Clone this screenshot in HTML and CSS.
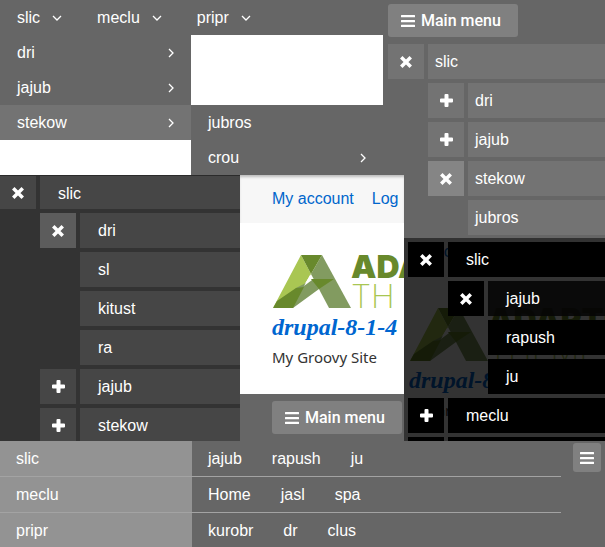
FILE: index.html
```html
<!DOCTYPE html>
<html lang="en">
<head>
<meta charset="utf-8">
<title>Menu styles</title>
<link rel="stylesheet" href="styles.css">
</head>
<body>
<svg class="defs" aria-hidden="true">
  <symbol id="bars" viewBox="0 0 14 12"><path d="M.5 0h13q.5 0 .5.5v1.200q0 .5-.5.5H.5q-.5 0-.5-.5V.5Q0 0 .5 0zM.5 5h13q.5 0 .5.5v1.200q0 .5-.5.5H.5q-.5 0-.5-.5V5.500Q0 5 .5 5zM.5 9.800h13q.5 0 .5.5v1.200q0 .5-.5.5H.5q-.5 0-.5-.5v-1.200q0-.5.5-.5z"/></symbol>
  <symbol id="plus" viewBox="0 0 13 13"><path d="M5.5 0h2q1 0 1 1v3.500h3.500q1 0 1 1v2q0 1-1 1H8.500V12q0 1-1 1h-2q-1 0-1-1V8.500H1q-1 0-1-1v-2q0-1 1-1h3.500V1q0-1 1-1z"/></symbol>
  <symbol id="cross" viewBox="0 0 12 12"><path d="M2.500 2.500l7 7M9.500 2.500l-7 7" fill="none" stroke="currentColor" stroke-width="3.500" stroke-linecap="square"/></symbol>
  <symbol id="down" viewBox="0 0 10 6"><path d="M1 1l4 4 4-4" fill="none" stroke="currentColor" stroke-width="1.300"/></symbol>
  <symbol id="right" viewBox="0 0 6 10"><path d="M1 1l4 4-4 4" fill="none" stroke="currentColor" stroke-width="1.300"/></symbol>
  <symbol id="mark" viewBox="0 0 78 53">
    <path fill="#a9c653" d="M28 0l10 19-7 11-8 4L0 53z"/>
    <path fill="#829b60" d="M49 0l29 53H56L38 19z"/>
    <path fill="#829b60" d="M38 24h23L46 34 20 53h-6l9-20 8-4z"/>
    <path fill="#fff" d="M37 20l-6 11 8-6z"/>
    <path fill="#68892c" d="M28 0h21L38 19zM38 24h23L46 34zM0 53l4-7 19-13 8-1-11 21z"/>
  </symbol>
</svg>
<main class="board">
  <nav class="drops" aria-label="Drop-down menu">
    <div class="drops-bar">
      <a href="#">slic <svg class="down"><use href="#down"/></svg></a>
      <a href="#">meclu <svg class="down"><use href="#down"/></svg></a>
      <a href="#">pripr <svg class="down"><use href="#down"/></svg></a>
    </div>
    <div class="drops-body">
      <div class="sub">
        <a href="#">dri <svg class="right"><use href="#right"/></svg></a>
        <a href="#">jajub <svg class="right"><use href="#right"/></svg></a>
        <a class="hover" href="#">stekow <svg class="right"><use href="#right"/></svg></a>
      </div>
      <div class="sub fly">
        <a href="#">jubros</a>
        <a href="#">crou <svg class="right"><use href="#right"/></svg></a>
      </div>
    </div>
  </nav>

  <nav class="tree grey" aria-label="Main menu">
    <button class="toggle" type="button"><svg class="bars"><use href="#bars"/></svg>Main menu</button>
    <div class="row"><button type="button" aria-label="Close slic"><svg class="cross"><use href="#cross"/></svg></button><a href="#">slic</a></div>
    <div class="row deep"><button type="button" aria-label="Open dri"><svg class="plus"><use href="#plus"/></svg></button><a href="#">dri</a></div>
    <div class="row deep"><button type="button" aria-label="Open jajub"><svg class="plus"><use href="#plus"/></svg></button><a href="#">jajub</a></div>
    <div class="row deep"><button class="on" type="button" aria-label="Close stekow"><svg class="cross"><use href="#cross"/></svg></button><a href="#">stekow</a></div>
    <div class="row deeper"><a href="#">jubros</a></div>
  </nav>

  <nav class="tree dark" aria-label="Dark menu">
    <div class="row"><button type="button" aria-label="Close slic"><svg class="cross"><use href="#cross"/></svg></button><a href="#">slic</a></div>
    <div class="row deep"><button class="on" type="button" aria-label="Close dri"><svg class="cross"><use href="#cross"/></svg></button><a href="#">dri</a></div>
    <div class="row deeper"><a href="#">sl</a></div>
    <div class="row deeper"><a href="#">kitust</a></div>
    <div class="row deeper"><a href="#">ra</a></div>
    <div class="row deep"><button type="button" aria-label="Open jajub"><svg class="plus"><use href="#plus"/></svg></button><a href="#">jajub</a></div>
    <div class="row deep"><button type="button" aria-label="Open stekow"><svg class="plus"><use href="#plus"/></svg></button><a href="#">stekow</a></div>
  </nav>

  <section class="site">
    <div class="account"><a href="#">My account</a><a href="#">Log</a></div>
    <div class="brand">
      <div class="logo"><svg class="mark"><use href="#mark"/></svg><div class="words"><b>ADA</b><i>TH</i></div></div>
      <a class="name" href="#">drupal-8-1-4</a>
      <div class="slogan">My Groovy Site</div>
    </div>
    <div class="foot"><button class="toggle" type="button"><svg class="bars"><use href="#bars"/></svg>Main menu</button></div>
  </section>

  <nav class="tree black" aria-label="Overlay menu">
    <div class="behind" aria-hidden="true">
      <div class="account"><span>My account</span></div>
      <div class="brand">
        <div class="logo"><svg class="mark"><use href="#mark"/></svg><div class="words"><b>ADAPTI</b><i>THEME</i></div></div>
        <span class="name">drupal-8-1-4</span>
        <div class="slogan">My Groovy Site</div>
      </div>
    </div>
    <div class="row"><button type="button" aria-label="Close slic"><svg class="cross"><use href="#cross"/></svg></button><a href="#">slic</a></div>
    <div class="row deep"><button type="button" aria-label="Close jajub"><svg class="cross"><use href="#cross"/></svg></button><a class="hover" href="#">jajub</a></div>
    <div class="row deeper"><a href="#">rapush</a></div>
    <div class="row deeper"><a href="#">ju</a></div>
    <div class="row"><button type="button" aria-label="Open meclu"><svg class="plus"><use href="#plus"/></svg></button><a href="#">meclu</a></div>
    <div class="row"><button type="button" aria-label="Open pripr"></button><a href="#" aria-label="pripr"></a></div>
  </nav>
</main>

<nav class="mega" aria-label="Mega menu">
  <div class="mega-rows">
    <div class="mega-row"><a class="head" href="#">slic</a><div class="links"><a href="#">jajub</a><a href="#">rapush</a><a href="#">ju</a></div></div>
    <div class="mega-row"><a class="head" href="#">meclu</a><div class="links"><a href="#">Home</a><a href="#">jasl</a><a href="#">spa</a></div></div>
    <div class="mega-row"><a class="head" href="#">pripr</a><div class="links"><a href="#">kurobr</a><a href="#">dr</a><a href="#">clus</a></div></div>
  </div>
  <button class="mini" type="button" aria-label="Menu"><svg class="bars"><use href="#bars"/></svg></button>
</nav>
</body>
</html>
```
FILE: styles.css
```css
* { box-sizing: border-box; }
body {
  margin: 0;
  background: #666;
  color: #fff;
  font: 16px/35px "Liberation Sans", Arial, sans-serif;
}
a { color: inherit; text-decoration: none; }
button { border: 0; padding: 0; color: inherit; font: inherit; }
svg { display: block; flex: none; fill: currentColor; }
.defs { position: absolute; width: 0; height: 0; }
.bars { width: 14px; height: 12px; }
.plus { width: 13px; height: 13px; }
.cross { width: 12px; height: 12px; }
.down { width: 10px; height: 6px; }
.right { width: 6px; height: 10px; }

.board {
  display: grid;
  grid-template-columns: 240px 144px 20px minmax(0, 1fr);
  grid-template-rows: auto 63px 203px;
}

/* Drop-down menu */
.drops { grid-area: 1 / 1 / 2 / 3; }
.drops-bar { display: flex; }
.drops-bar a {
  display: flex;
  align-items: center;
  gap: 12px;
  padding: 0 18px 0 17px;
}
.drops-body {
  display: flex;
  height: 140px;
  margin-right: 1px;
  background: #fff;
}
.sub { width: 191px; align-self: flex-start; background: #666; }
.fly { flex: 1; align-self: flex-end; }
.sub a {
  display: flex;
  align-items: center;
  justify-content: space-between;
  padding: 0 17px;
}
.sub .hover { background: #737373; }

/* Tree menus */
.tree {
  display: flex;
  flex-direction: column;
  gap: 4px;
  min-width: 0;
  overflow: hidden;
}
.row { display: flex; flex: none; gap: 4px; height: 35px; }
.row button {
  display: grid;
  place-items: center;
  width: 36px;
}
.row a { flex: 1; padding-left: 18px; }
.deep { margin-left: 40px; }
.deeper { margin-left: 80px; }

.grey {
  grid-area: 1 / 2 / 3 / 5;
  margin-left: 144px;
  padding: 4px 0 3px 4px;
}
.grey .toggle { align-self: flex-start; margin-bottom: 3px; }
.grey .row button, .grey .row a { background: #737373; }
.grey .row .on { background: #858585; }
.grey .row a { padding-left: 7px; }

.dark {
  grid-area: 2 / 1 / 4 / 2;
  height: 266px;
  background: #333;
  border-top: 1px solid #2b2b2b;
}
.dark .row:first-child { height: 33px; }
.dark .row button, .dark .row a { background: #464646; }
.dark .row .on { background: #5c5c5c; }

.black {
  grid-area: 3 / 4 / 4 / 5;
  position: relative;
  padding: 4px 0 0 4px;
  background: #333;
}
.black .row { position: relative; }
.black .row button, .black .row a { background: #000; }
.black .row .hover { background: rgba(5, 5, 5, .9); }
.behind {
  position: absolute;
  top: -10px;
  left: -27px;
  width: 400px;
  background: #fff;
}
.behind::after {
  content: "";
  position: absolute;
  inset: 0;
  background: rgba(0, 0, 0, .8);
}

/* Buttons */
.toggle {
  display: flex;
  align-items: center;
  gap: 6px;
  height: 33px;
  padding: 0 17px 0 13px;
  border-radius: 3px;
  background: #808080;
  font: 500 16px/33px Roboto, sans-serif;
  white-space: nowrap;
}

/* Site preview */
.site {
  grid-area: 2 / 2 / 4 / 4;
  z-index: 1;
  display: flex;
  flex-direction: column;
  overflow: hidden;
  background: #fff;
}
.account {
  display: flex;
  gap: 18px;
  height: 48px;
  padding-left: 32px;
  background: #f7f7f7;
  color: #0066cc;
  line-height: 47px;
  white-space: nowrap;
}
.site .account { box-shadow: inset 0 3px 3px -1px #bbb; }
.brand { height: 171px; padding: 32px 0 0 32px; white-space: nowrap; }
.logo { display: flex; height: 54px; }
.mark { width: 78px; height: 53px; margin-left: 1px; }
.words {
  display: flex;
  flex-direction: column;
  font: 700 32px/30px Inter, sans-serif;
  margin-top: -3px;
}
.words b { color: #68892c; }
.words i { color: #a9c653; font-style: normal; font-weight: 200; }
.name {
  display: block;
  color: #0066d0;
  font: italic 700 24px/36px "Liberation Serif", serif;
}
.slogan { color: #333; font: 15px/24px "Noto Sans", sans-serif; }
.foot { padding: 7px 2px 7px 32px; background: #666; }

/* Mega menu */
.mega { display: flex; align-items: flex-start; background: #666; }
.mega-rows { flex: 1; }
.mega-row { display: flex; border-bottom: 1px solid #a3a3a3; }
.mega-row:last-child { border-bottom: 0; height: 34px; }
.head { width: 192px; padding-left: 16px; background: #939393; }
.links { display: flex; gap: 30px; padding-left: 16px; }
.mini {
  display: grid;
  place-items: center;
  width: 28px;
  height: 29px;
  margin: 2px 4px 0 12px;
  border-radius: 3px;
  background: #808080;
}
```
